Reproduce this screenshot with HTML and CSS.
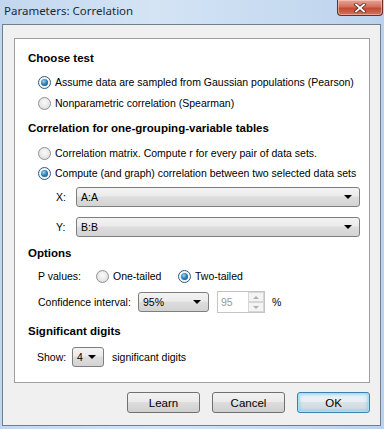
FILE: index.html
```html
<!DOCTYPE html>
<html>
<head>
  <meta charset="UTF-8">
  <title>Parameters: Correlation</title>
  <link rel="stylesheet" href="styles.css">
</head>
<body>
  <div class="window">
    <div class="titlebar">
      <span class="title">Parameters: Correlation</span>
      <button class="close">
        <svg width="14" height="10" viewBox="0 0 14 10">
          <path d="M3 1.5 L11 8.5 M11 1.5 L3 8.5" stroke="#5a2a22" stroke-width="3.4" stroke-linecap="square"/>
          <path d="M3 1.5 L11 8.5 M11 1.5 L3 8.5" stroke="#ffffff" stroke-width="1.8" stroke-linecap="square"/>
        </svg>
      </button>
    </div>

    <div class="client">
      <div class="panel">
        <div class="heading h-first">Choose test</div>
        <div class="row indent r-a"><span class="radio checked"></span>Assume data are sampled from Gaussian populations (Pearson)</div>
        <div class="row indent r-b"><span class="radio"></span>Nonparametric correlation (Spearman)</div>

        <div class="heading h-second">Correlation for one-grouping-variable tables</div>
        <div class="row indent r-c"><span class="radio"></span>Correlation matrix. Compute r for every pair of data sets.</div>
        <div class="row indent"><span class="radio checked"></span>Compute (and graph) correlation between two selected data sets</div>

        <div class="row pick r-x">
          <span class="pick-label">X:</span>
          <div class="combo wide"><span>A:A</span><span class="arrow"></span></div>
        </div>
        <div class="row pick r-y">
          <span class="pick-label">Y:</span>
          <div class="combo wide"><span>B:B</span><span class="arrow"></span></div>
        </div>

        <div class="heading h-options">Options</div>
        <div class="row indent r-p">
          <span class="p-label">P values:</span>
          <span class="radio"></span><span class="p-one">One-tailed</span>
          <span class="radio checked"></span>Two-tailed
        </div>
        <div class="row indent r-ci">
          <span class="ci-label">Confidence interval:</span>
          <div class="combo ci"><span>95%</span><span class="arrow"></span></div>
          <div class="spin">
            <span class="spin-value">95</span>
            <span class="spin-btns">
              <span class="spin-btn"><span class="tri up"></span></span>
              <span class="spin-btn"><span class="tri down"></span></span>
            </span>
          </div>
          <span class="pct">%</span>
        </div>

        <div class="heading h-sig">Significant digits</div>
        <div class="row indent-show r-show">
          <span class="show-label">Show:</span>
          <div class="combo digits"><span>4</span><span class="arrow"></span></div>
          <span>significant digits</span>
        </div>
      </div>

      <div class="buttons">
        <button class="btn">Learn</button>
        <button class="btn">Cancel</button>
        <button class="btn default">OK</button>
      </div>
    </div>
  </div>
</body>
</html>
```

FILE: styles.css
```css
body {
  margin: 0;
  font-family: "Liberation Sans", Arial, sans-serif;
  font-size: 10.5px;
  color: #000;
}
.window {
  width: 384px;
  height: 429px;
  box-sizing: border-box;
  padding: 0 3px 3px 2px;
  background: linear-gradient(to right, #c2d7ee, #d4e4f5 40%, #c6daf0 75%, #bcd2ec);
  display: flex;
  flex-direction: column;
}
.titlebar {
  height: 24px;
  display: flex;
  align-items: flex-start;
  justify-content: space-between;
}
.title {
  font-family: "Noto Sans", "Open Sans", sans-serif;
  font-size: 11.5px;
  color: #1c2a38;
  margin: 3px 0 0 2px;
}
.close {
  width: 46px;
  height: 16px;
  margin-right: -2px;
  padding: 0;
  border: 1px solid #6e2d24;
  border-top: none;
  border-radius: 0 0 4px 4px;
  background: linear-gradient(to bottom, #e7a597, #d2705c 45%, #c24a33 55%, #d0745c);
  box-shadow: inset 0 0 0 1px rgba(255, 220, 210, 0.5);
  display: flex;
  align-items: center;
  justify-content: center;
}
.client {
  flex: 1;
  border: 1px solid #6f7f92;
  background: #f0f0f0;
  padding: 13px 10px 12px 11px;
  display: flex;
  flex-direction: column;
}
.panel {
  background: #fff;
  border: 1px solid #a0a0a0;
  padding: 9px 0 15px 13px;
}
.heading {
  height: 20px;
  line-height: 20px;
  font-weight: bold;
  font-size: 11.5px;
}
.row {
  height: 20px;
  display: flex;
  align-items: center;
  white-space: nowrap;
}
.indent {
  padding-left: 10px;
}
.r-a { margin-top: 4px; }
.r-b { margin-top: 1px; }
.h-second { margin-top: 5px; }
.r-c { margin-top: 5px; }
.r-x { margin-top: 4px; }
.r-y { margin-top: 10px; }
.h-options { margin-top: 6px; }
.r-p { margin-top: 3px; }
.r-ci { margin-top: 6px; }
.h-sig { margin-top: 9px; }
.r-show { margin-top: 6px; }

.radio {
  width: 11px;
  height: 11px;
  border: 1px solid #8f8f8f;
  border-radius: 50%;
  background: radial-gradient(circle at 50% 40%, #fbfbfb, #e2e2e2 70%, #d4d4d4);
  margin-right: 4px;
  position: relative;
  flex: none;
}
.radio.checked {
  border-color: #2d5d83;
  background: #f4f4f4;
}
.radio.checked::after {
  content: "";
  position: absolute;
  left: 2px;
  top: 2px;
  width: 7px;
  height: 7px;
  border-radius: 50%;
  background: radial-gradient(circle at 40% 35%, #9fd6f4, #2e85bc 45%, #123e66);
}

.pick {
  padding-left: 28px;
}
.pick-label {
  width: 20px;
}
.combo {
  height: 18px;
  border: 1px solid #7e7e7e;
  border-radius: 3px;
  background: linear-gradient(to bottom, #f3f3f3, #ebebeb 45%, #dddddd 50%, #d3d3d3);
  display: flex;
  align-items: center;
  justify-content: space-between;
  padding: 0 7px 0 4px;
  box-sizing: content-box;
}
.combo.wide {
  width: 271px;
}
.arrow {
  width: 0;
  height: 0;
  border-left: 4px solid transparent;
  border-right: 4px solid transparent;
  border-top: 4px solid #000;
}
.p-label {
  width: 58px;
}
.p-one {
  width: 65px;
}
.ci-label {
  width: 100px;
}
.combo.ci {
  width: 58px;
}
.spin {
  margin-left: 8px;
  width: 46px;
  height: 20px;
  border: 1px solid #c4c4c4;
  display: flex;
  justify-content: space-between;
  align-items: center;
  color: #9a9a9a;
  background: #fff;
}
.spin-value {
  padding-left: 3px;
}
.spin-btns {
  width: 16px;
  height: 20px;
  display: flex;
  flex-direction: column;
}
.spin-btn {
  flex: 1;
  border: 1px solid #d6d6d6;
  background: #f4f4f4;
  display: flex;
  align-items: center;
  justify-content: center;
}
.tri {
  width: 0;
  height: 0;
  border-left: 3px solid transparent;
  border-right: 3px solid transparent;
}
.tri.up {
  border-bottom: 3px solid #b0b0b0;
}
.tri.down {
  border-top: 3px solid #b0b0b0;
}
.pct {
  margin-left: 7px;
}
.indent-show {
  padding-left: 9px;
}
.show-label {
  width: 35px;
}
.combo.digits {
  width: 19px;
  margin-right: 8px;
}

.buttons {
  margin-top: 9px;
  display: flex;
  justify-content: flex-end;
  gap: 12px;
}
.btn {
  width: 73px;
  height: 21px;
  font-family: "Liberation Sans", Arial, sans-serif;
  font-size: 11.5px;
  border: 1px solid #707070;
  border-radius: 3px;
  background: linear-gradient(to bottom, #f2f2f2, #ebebeb 45%, #dddddd 50%, #cfcfcf);
  padding: 0;
  color: #000;
}
.btn.default {
  border-color: #3c7fb1;
  box-shadow: inset 0 0 0 1px #a8e0f8, inset 0 0 3px 2px rgba(110, 195, 235, 0.55);
  background: linear-gradient(to bottom, #f0f4f7, #e8eef2 45%, #d8e2e8 50%, #ccd8e0);
}
```
